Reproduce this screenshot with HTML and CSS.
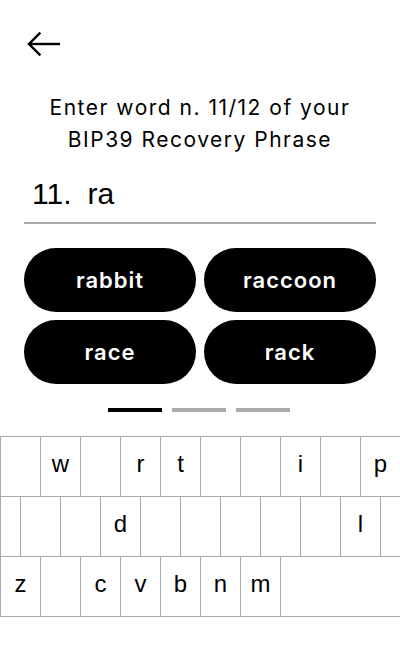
FILE: index.html
```html
<!DOCTYPE html>
<html>
<head>
<meta charset="utf-8">
<link rel="stylesheet" href="styles.css">
</head>
<body>
<div class="screen">
  <div class="header">
    <svg class="back" width="34" height="24" viewBox="0 0 34 24">
      <path d="M2 12 H33" stroke="#000" stroke-width="2.4" fill="none"/>
      <path d="M12.5 1.5 L2 12 L12.5 22.5" stroke="#000" stroke-width="2.4" fill="none" stroke-linecap="square"/>
    </svg>
  </div>
  <div class="title">Enter word n. 11/12 of your<br>BIP39 Recovery Phrase</div>
  <div class="input">
    <span class="num">11.</span><span class="typed">ra</span>
  </div>
  <div class="suggestions">
    <div class="pill">rabbit</div>
    <div class="pill">raccoon</div>
    <div class="pill">race</div>
    <div class="pill">rack</div>
  </div>
  <div class="progress">
    <div class="bar active"></div>
    <div class="bar"></div>
    <div class="bar"></div>
  </div>
  <div class="keyboard">
    <div class="row">
      <div class="key"></div><div class="key">w</div><div class="key"></div><div class="key">r</div><div class="key">t</div><div class="key"></div><div class="key"></div><div class="key">i</div><div class="key"></div><div class="key">p</div>
    </div>
    <div class="row">
      <div class="key half"></div><div class="key"></div><div class="key"></div><div class="key">d</div><div class="key"></div><div class="key"></div><div class="key"></div><div class="key"></div><div class="key"></div><div class="key">l</div><div class="key half"></div>
    </div>
    <div class="row last">
      <div class="key">z</div><div class="key"></div><div class="key">c</div><div class="key">v</div><div class="key">b</div><div class="key">n</div><div class="key">m</div><div class="key wide"></div>
    </div>
  </div>
</div>
</body>
</html>
```

FILE: styles.css
```css
html, body {
  margin: 0;
  padding: 0;
  background: #fff;
}

.screen {
  width: 400px;
  height: 672px;
  overflow: hidden;
  display: flex;
  flex-direction: column;
  font-family: "Liberation Sans", Arial, sans-serif;
  color: #000;
}

.header {
  padding: 32px 0 0 27px;
  height: 24px;
}

.back {
  display: block;
}

.title {
  margin-top: 36px;
  font-family: Inter, "Noto Sans", sans-serif;
  font-size: 21px;
  letter-spacing: 1.5px;
  line-height: 32px;
  text-align: center;
}

.input {
  margin: 18px 24px 0 24px;
  padding: 0 0 8px 8px;
  border-bottom: 2px solid #aaa;
  font-size: 30px;
  line-height: 40px;
  display: flex;
}

.num {
  margin-right: 16px;
}

.suggestions {
  margin: 24px 24px 0 24px;
  display: grid;
  grid-template-columns: 172px 172px;
  grid-auto-rows: 64px;
  gap: 8px;
}

.pill {
  background: #000;
  color: #fff;
  border-radius: 32px;
  display: flex;
  align-items: center;
  justify-content: center;
  font-family: Inter, "Noto Sans", sans-serif;
  font-weight: 600;
  font-size: 22px;
  letter-spacing: 1px;
}

.progress {
  margin-top: 24px;
  display: flex;
  justify-content: center;
  gap: 10px;
  padding-right: 2px;
}

.bar {
  width: 54px;
  height: 4px;
  background: #aaa;
}

.bar.active {
  background: #000;
}

.keyboard {
  margin-top: 24px;
  display: flex;
  flex-direction: column;
}

.row {
  display: flex;
  height: 60px;
  box-sizing: border-box;
  border-top: 1px solid #aaa;
}

.row.last {
  height: 61px;
  border-bottom: 1px solid #aaa;
}

.key {
  flex: none;
  width: 40px;
  box-sizing: border-box;
  border-left: 1px solid #aaa;
  text-align: center;
  font-size: 24px;
  line-height: 54px;
}

.key.half {
  width: 20px;
}

.key.wide {
  width: 120px;
}
```
